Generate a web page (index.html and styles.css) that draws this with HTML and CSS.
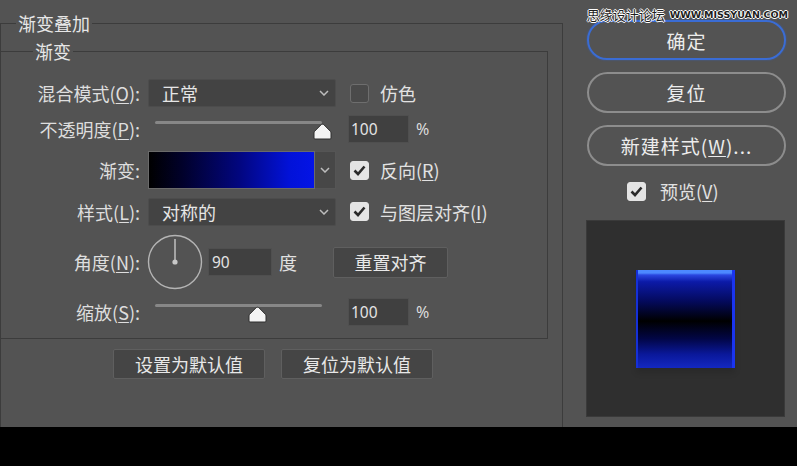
FILE: index.html
```html
<!DOCTYPE html>
<html lang="zh-CN">
<head>
<meta charset="utf-8">
<title>渐变叠加</title>
<link rel="stylesheet" href="styles.css">
</head>
<body>
<div class="screen">
  <div class="dialog">
    <fieldset class="outer">
      <legend class="outer-legend">渐变叠加</legend>
      <fieldset class="inner">
        <legend class="inner-legend">渐变</legend>
        <div class="rows">
          <div class="row r-select">
            <span class="label">混合模式(<u>O</u>):</span>
            <div class="select"><span class="select-text">正常</span><svg class="chev" width="10" height="6" viewBox="0 0 10 6"><polyline points="1,1 5,5 9,1" fill="none" stroke="#bdbdbd" stroke-width="1.5"/></svg></div>
            <span class="check"></span>
            <span class="check-text">仿色</span>
          </div>
          <div class="row r-slider">
            <span class="label">不透明度(<u>P</u>):</span>
            <div class="slider">
              <div class="track"></div>
              <svg class="thumb" style="left:165px" width="19" height="17" viewBox="0 0 19 17"><path d="M9.5 1.2 Q10.4 1.2 11.2 2 L17.4 8.3 Q18 9 18 10 L18 15 Q18 16 17 16 L2 16 Q1 16 1 15 L1 10 Q1 9 1.6 8.3 L7.8 2 Q8.6 1.2 9.5 1.2 Z" fill="#f4f4f4" stroke="#2e2e2e" stroke-width="1"/></svg>
            </div>
            <span class="num">100</span>
            <span class="unit">%</span>
          </div>
          <div class="row r-grad">
            <span class="label">渐变:</span>
            <div class="grad">
              <div class="grad-bar"></div>
              <div class="grad-drop"><svg width="10" height="6" viewBox="0 0 10 6"><polyline points="1,1 5,5 9,1" fill="none" stroke="#bdbdbd" stroke-width="1.5"/></svg></div>
            </div>
            <span class="check checked"><svg width="13" height="11" viewBox="0 0 13 11"><polyline points="1.5,5.5 5,9 11.5,1.5" fill="none" stroke="#2a2a2a" stroke-width="2.6"/></svg></span>
            <span class="check-text">反向(<u>R</u>)</span>
          </div>
          <div class="row r-select2">
            <span class="label">样式(<u>L</u>):</span>
            <div class="select"><span class="select-text">对称的</span><svg class="chev" width="10" height="6" viewBox="0 0 10 6"><polyline points="1,1 5,5 9,1" fill="none" stroke="#bdbdbd" stroke-width="1.5"/></svg></div>
            <span class="check checked"><svg width="13" height="11" viewBox="0 0 13 11"><polyline points="1.5,5.5 5,9 11.5,1.5" fill="none" stroke="#2a2a2a" stroke-width="2.6"/></svg></span>
            <span class="check-text">与图层对齐(<u>I</u>)</span>
          </div>
          <div class="row r-angle">
            <span class="label">角度(<u>N</u>):</span>
            <svg class="dial" width="56" height="56" viewBox="0 0 56 56"><circle cx="28" cy="28" r="26.5" fill="none" stroke="#b4b4b4" stroke-width="1.4"/><line x1="28" y1="28" x2="28" y2="5" stroke="#c8c8c8" stroke-width="1.4"/><circle cx="28" cy="28" r="2.6" fill="#c8c8c8"/></svg>
            <span class="num num-angle">90</span>
            <span class="deg">度</span>
            <span class="btn btn-reset">重置对齐</span>
          </div>
          <div class="row r-slider">
            <span class="label">缩放(<u>S</u>):</span>
            <div class="slider">
              <div class="track"></div>
              <svg class="thumb" style="left:100px" width="19" height="17" viewBox="0 0 19 17"><path d="M9.5 1.2 Q10.4 1.2 11.2 2 L17.4 8.3 Q18 9 18 10 L18 15 Q18 16 17 16 L2 16 Q1 16 1 15 L1 10 Q1 9 1.6 8.3 L7.8 2 Q8.6 1.2 9.5 1.2 Z" fill="#f4f4f4" stroke="#2e2e2e" stroke-width="1"/></svg>
            </div>
            <span class="num">100</span>
            <span class="unit">%</span>
          </div>
        </div>
      </fieldset>
      <div class="defaults">
        <span class="btn btn-default">设置为默认值</span>
        <span class="btn btn-default">复位为默认值</span>
      </div>
    </fieldset>
    <div class="side">
      <span class="pill pill-ok">确定</span>
      <span class="pill">复位</span>
      <span class="pill">新建样式(<u>W</u>)...</span>
      <div class="preview-check">
        <span class="check checked"><svg width="13" height="11" viewBox="0 0 13 11"><polyline points="1.5,5.5 5,9 11.5,1.5" fill="none" stroke="#2a2a2a" stroke-width="2.6"/></svg></span>
        <span class="check-text">预览(<u>V</u>)</span>
      </div>
      <div class="preview">
        <div class="swatch"></div>
      </div>
    </div>
  </div>
  <div class="watermark"><span class="wm-cn">思缘设计论坛</span><span class="wm-en">WWW.MISSYUAN.COM</span></div>
</div>
</body>
</html>
```
FILE: styles.css
```css
html, body {
  margin: 0;
  padding: 0;
  background: #000;
}
.screen {
  position: relative;
  width: 797px;
  height: 466px;
  background: #000;
  overflow: hidden;
  font-family: "Noto Sans CJK SC", "Noto Sans", sans-serif;
  color: #e2e2e2;
  font-size: 18px;
}
.dialog {
  display: flex;
  height: 427px;
  background: #535353;
}
u {
  text-decoration-thickness: 1px;
  text-underline-offset: 2px;
}
.outer {
  box-sizing: border-box;
  width: 563px;
  height: 414px;
  margin: 13px 0 0 0;
  padding: 0;
  border: 1px solid #3c3c3c;
  border-bottom: none;
  min-width: 0;
}
.outer-legend {
  margin-left: 15px;
  padding: 0 2px;
  line-height: 20px;
  font-size: 18px;
  color: #e6e6e6;
}
.inner {
  box-sizing: border-box;
  width: 547px;
  margin: 8px 0 0 0;
  padding: 0;
  border: 1px solid #3c3c3c;
  border-left: none;
  min-width: 0;
}
.inner-legend {
  margin-left: 32px;
  padding: 0 2px;
  line-height: 20px;
  font-size: 18px;
  color: #e6e6e6;
}
.rows {
  display: flex;
  flex-direction: column;
  gap: 8px;
  padding: 18px 0 12px 0;
}
.row {
  display: flex;
  align-items: center;
  height: 28px;
}
.r-grad { height: 38px; }
.r-select2 { height: 29px; }
.r-angle { height: 56px; }
.label {
  width: 139px;
  text-align: right;
  white-space: nowrap;
  color: #dedede;
  line-height: 20px;
}
.select {
  box-sizing: border-box;
  width: 188px;
  height: 28px;
  margin-left: 8px;
  background: #434343;
  border: 1px solid #4c4c4c;
  border-radius: 2px;
  display: flex;
  align-items: center;
  justify-content: space-between;
  padding: 0 6px 0 13px;
}
.select-text {
  line-height: 20px;
  color: #e6e6e6;
}
.check {
  box-sizing: border-box;
  width: 19px;
  height: 19px;
  margin-left: 14px;
  border: 1.5px solid #6e6e6e;
  border-radius: 3px;
  background: #4a4a4a;
  display: flex;
  align-items: center;
  justify-content: center;
  flex: none;
}
.check.checked {
  background: #e4e4e4;
  border-color: #e4e4e4;
}
.check-text {
  margin-left: 11px;
  line-height: 20px;
  color: #e2e2e2;
  white-space: nowrap;
}
.slider {
  position: relative;
  width: 188px;
  height: 28px;
  margin-left: 8px;
}
.track {
  width: 167px;
  height: 3px;
  margin: 6px 0 0 7px;
  background: #878787;
  border-radius: 2px;
}
.thumb {
  position: absolute;
  top: 8px;
}
.num {
  box-sizing: border-box;
  width: 61px;
  height: 28px;
  margin-left: 12px;
  padding-left: 2px;
  background: #404040;
  border: 1px solid #4f4f4f;
  font-family: "Noto Sans", "DejaVu Sans", sans-serif;
  font-size: 15.5px;
  line-height: 26px;
  color: #e4e4e4;
}
.unit {
  margin-left: 7px;
  font-family: "Noto Sans", sans-serif;
  font-size: 16px;
  color: #dcdcdc;
}
.grad {
  display: flex;
  width: 188px;
  height: 38px;
  margin-left: 8px;
}
.grad-bar {
  box-sizing: border-box;
  width: 167px;
  height: 38px;
  border: 1px solid #6a6a6a;
  background: linear-gradient(to right, #000 0%, #01012a 20%, #020680 55%, #0212d8 85%, #0414e6 100%);
}
.grad-drop {
  box-sizing: border-box;
  width: 21px;
  height: 38px;
  background: #474747;
  border: 1px solid #555;
  border-left: none;
  display: flex;
  align-items: center;
  justify-content: center;
}
.dial {
  margin-left: 7px;
  flex: none;
}
.num-angle {
  width: 64px;
  margin-left: 5px;
  padding-left: 3px;
}
.deg {
  margin-left: 7px;
  color: #e2e2e2;
}
.btn {
  box-sizing: border-box;
  display: flex;
  align-items: center;
  justify-content: center;
  background: #454545;
  border: 1px solid #5f5f5f;
  border-radius: 2px;
  color: #e8e8e8;
  white-space: nowrap;
}
.btn-reset {
  width: 115px;
  height: 31px;
  margin-left: 36px;
}
.defaults {
  display: flex;
  gap: 16px;
  margin-top: 10px;
  padding-left: 112px;
}
.btn-default {
  width: 152px;
  height: 30px;
}
.side {
  display: flex;
  flex-direction: column;
  width: 234px;
  padding: 20px 0 0 24px;
  box-sizing: border-box;
}
.pill {
  box-sizing: border-box;
  width: 199px;
  height: 41px;
  margin-bottom: 12px;
  border: 2px solid #8d8d8d;
  border-radius: 21px;
  display: flex;
  align-items: center;
  justify-content: center;
  font-size: 19px;
  letter-spacing: 1px;
  color: #ececec;
}
.pill-ok {
  height: 40px;
  border-color: #3a6cd4;
  box-shadow: 0 0 2px #3a5fb0;
}
.preview-check {
  display: flex;
  align-items: center;
  margin: 3px 0 0 40px;
  height: 20px;
}
.preview-check .check {
  margin-left: 0;
}
.preview-check .check-text {
  margin-left: 14px;
  font-size: 18px;
}
.preview {
  box-sizing: border-box;
  width: 199px;
  height: 197px;
  margin-top: 19px;
  margin-left: -1px;
  background: #2f2f2f;
  border: 1px solid #3a3a3a;
  display: flex;
  align-items: center;
  justify-content: center;
}
.swatch {
  width: 99px;
  height: 98px;
  background: linear-gradient(to bottom, #4c88ff 0, #4c88ff 3px, #2a46e0 5px, #0c1aa8 12%, #040a5c 32%, #000 52%, #020645 70%, #0a189a 86%, #1428c0 100%);
  box-shadow: inset -3px 0 0 #1a34f0, inset 2px 0 0 #1530d8, 0 5px 6px rgba(0,0,0,0.12);
}
.watermark {
  position: absolute;
  top: 7px;
  right: 9px;
  display: flex;
  align-items: center;
  gap: 5px;
  white-space: nowrap;
}
.wm-cn {
  font-size: 13px;
  color: #1e1e1e;
  line-height: 16px;
  text-shadow: 1px 0 0 #fff, -1px 0 0 #fff, 0 1px 0 #fff, 0 -1px 0 #fff;
}
.wm-en {
  font-family: "DejaVu Sans", sans-serif;
  font-size: 9.5px;
  font-weight: bold;
  color: #1e1e1e;
  line-height: 16px;
  text-shadow: 1px 0 0 #fff, -1px 0 0 #fff, 0 1px 0 #fff, 0 -1px 0 #fff;
}
```
